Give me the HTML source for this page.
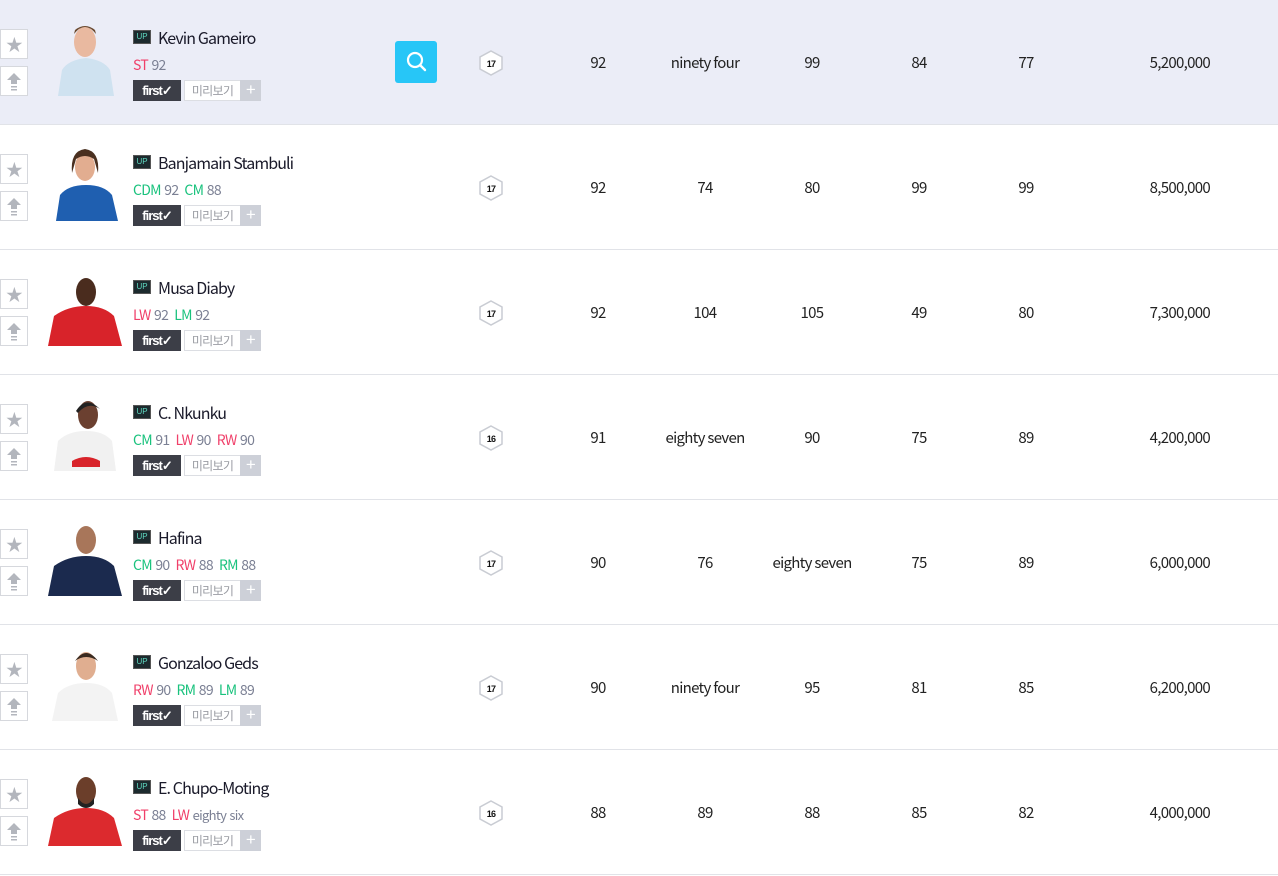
<!DOCTYPE html>
<html><head><meta charset="utf-8"><style>
*{margin:0;padding:0;box-sizing:border-box}
body{width:1278px;height:876px;background:#fff;font-family:"Noto Sans CJK KR","Liberation Sans",sans-serif;color:#222;overflow:hidden;position:relative;letter-spacing:-0.7px}
.r{position:absolute;left:0;width:1278px;height:125px;border-bottom:1px solid #e1e3e8}
.r.h{background:#ebedf7}
.b{position:absolute;left:0;width:28px;height:30px;background:#fff;border:1px solid #d6d8dd;color:#b3b6bd;text-align:center;font-size:17px;line-height:28px}
.s{top:29px}.a{top:66px}
.ph{position:absolute;left:48px;top:20px;width:76px;height:76px;overflow:hidden}
.up{position:absolute;left:133px;top:30px;width:18px;height:14px;background:#1c2a2e;border:1px solid #555;color:#5fd8c0;font-size:8px;line-height:12px;text-align:center;letter-spacing:0;font-family:"Liberation Sans",sans-serif}
.nm{position:absolute;left:158px;top:27px;font-size:16px;line-height:20px;color:#1a1a2a;letter-spacing:-0.9px}
.ps{position:absolute;left:133px;top:56px;font-size:14px;line-height:18px;color:#7b8094;word-spacing:1px}
.ps i{display:inline-block;width:6px}
.red{color:#f0406a}.grn{color:#19c27d}
.f{position:absolute;left:133px;top:80px;width:48px;height:21px;background:#3c3e47;color:#fff;font-weight:bold;font-size:13px;line-height:21px;text-align:center;letter-spacing:-1px;font-family:"Liberation Sans",sans-serif}
.m{position:absolute;left:184px;top:80px;width:57px;height:21px;border:1px solid #dcdee3;background:#fff;color:#9a9ca3;font-size:12px;line-height:19px;text-align:center}
.p{position:absolute;left:240px;top:80px;width:21px;height:21px;background:#cdd0d8;color:#fff;font-size:17px;line-height:20px;text-align:center;font-family:"Liberation Sans",sans-serif}
.hx{position:absolute;left:479px;top:50px;width:24px;height:26px}
.c{position:absolute;top:53px;width:100px;text-align:center;font-size:15px;line-height:20px;color:#222}
.pr{position:absolute;top:53px;right:68px;font-size:15px;line-height:20px;color:#222}
.sb{position:absolute;left:395px;top:41px;width:42px;height:42px;background:#27c6f7;border-radius:3px}
</style></head><body>

<div class="r h" style="top:0">
<div class="b s">★</div><div class="b a"><svg width="26" height="28"><path d="M13 6 L20 13 L16 13 L16 17 L10 17 L10 13 L6 13Z" fill="#b3b6bd"/><rect x="10" y="19" width="6" height="1.5" fill="#b3b6bd"/><rect x="10" y="22" width="6" height="1.5" fill="#b3b6bd"/></svg></div>
<div class="ph"><svg width="76" height="76"><path d="M10 76 L14 50 Q20 40 38 38 Q56 40 62 50 L66 76Z" fill="#cfe2f0"/><ellipse cx="37" cy="22" rx="11" ry="15" fill="#e9b9a0"/><path d="M26 14 Q37 0 48 14 L47 10 Q37 2 27 10Z" fill="#6b4a30"/></svg></div>
<div class="up">UP</div><div class="nm">Kevin Gameiro</div>
<div class="ps"><span class="red">ST</span> 92</div>
<div class="f">first✓</div><div class="m">미리보기</div><div class="p">+</div>
<div class="sb"><svg width="42" height="42"><circle cx="20" cy="19" r="7" fill="none" stroke="#fff" stroke-width="2.2"/><path d="M25 24 L30 29" stroke="#fff" stroke-width="2.4" stroke-linecap="round"/></svg></div>
<svg class="hx" viewBox="0 0 24 26"><path d="M12 1 L23 7 L23 19 L12 25 L1 19 L1 7Z" fill="#fff" stroke="#c9ccd3" stroke-width="1.5"/><text x="12" y="17" font-size="9" text-anchor="middle" font-family="Liberation Sans" font-weight="bold" fill="#111">17</text></svg>
<div class="c" style="left:548px">92</div><div class="c" style="left:655px">ninety four</div><div class="c" style="left:762px">99</div><div class="c" style="left:869px">84</div><div class="c" style="left:976px">77</div><div class="pr">5,200,000</div>
</div>

<div class="r" style="top:125px">
<div class="b s">★</div><div class="b a"><svg width="26" height="28"><path d="M13 6 L20 13 L16 13 L16 17 L10 17 L10 13 L6 13Z" fill="#b3b6bd"/><rect x="10" y="19" width="6" height="1.5" fill="#b3b6bd"/><rect x="10" y="22" width="6" height="1.5" fill="#b3b6bd"/></svg></div>
<div class="ph"><svg width="76" height="76"><path d="M8 76 L12 50 Q20 40 38 40 Q56 40 64 50 L70 76Z" fill="#1f5fb0"/><ellipse cx="37" cy="22" rx="10" ry="14" fill="#e2ad90"/><path d="M24 28 Q22 6 37 4 Q52 6 50 28 L46 14 Q37 8 28 14Z" fill="#4a3020"/></svg></div>
<div class="up">UP</div><div class="nm">Banjamain Stambuli</div>
<div class="ps"><span class="grn">CDM</span> 92<i></i><span class="grn">CM</span> 88</div>
<div class="f">first✓</div><div class="m">미리보기</div><div class="p">+</div>
<svg class="hx" viewBox="0 0 24 26"><path d="M12 1 L23 7 L23 19 L12 25 L1 19 L1 7Z" fill="#fff" stroke="#c9ccd3" stroke-width="1.5"/><text x="12" y="17" font-size="9" text-anchor="middle" font-family="Liberation Sans" font-weight="bold" fill="#111">17</text></svg>
<div class="c" style="left:548px">92</div><div class="c" style="left:655px">74</div><div class="c" style="left:762px">80</div><div class="c" style="left:869px">99</div><div class="c" style="left:976px">99</div><div class="pr">8,500,000</div>
</div>

<div class="r" style="top:250px">
<div class="b s">★</div><div class="b a"><svg width="26" height="28"><path d="M13 6 L20 13 L16 13 L16 17 L10 17 L10 13 L6 13Z" fill="#b3b6bd"/><rect x="10" y="19" width="6" height="1.5" fill="#b3b6bd"/><rect x="10" y="22" width="6" height="1.5" fill="#b3b6bd"/></svg></div>
<div class="ph"><svg width="76" height="76"><path d="M0 76 L6 46 Q20 36 38 36 Q56 36 66 46 L74 76Z" fill="#d8232a"/><ellipse cx="38" cy="22" rx="10" ry="14" fill="#4a2c1e"/></svg></div>
<div class="up">UP</div><div class="nm">Musa Diaby</div>
<div class="ps"><span class="red">LW</span> 92<i></i><span class="grn">LM</span> 92</div>
<div class="f">first✓</div><div class="m">미리보기</div><div class="p">+</div>
<svg class="hx" viewBox="0 0 24 26"><path d="M12 1 L23 7 L23 19 L12 25 L1 19 L1 7Z" fill="#fff" stroke="#c9ccd3" stroke-width="1.5"/><text x="12" y="17" font-size="9" text-anchor="middle" font-family="Liberation Sans" font-weight="bold" fill="#111">17</text></svg>
<div class="c" style="left:548px">92</div><div class="c" style="left:655px">104</div><div class="c" style="left:762px">105</div><div class="c" style="left:869px">49</div><div class="c" style="left:976px">80</div><div class="pr">7,300,000</div>
</div>

<div class="r" style="top:375px">
<div class="b s">★</div><div class="b a"><svg width="26" height="28"><path d="M13 6 L20 13 L16 13 L16 17 L10 17 L10 13 L6 13Z" fill="#b3b6bd"/><rect x="10" y="19" width="6" height="1.5" fill="#b3b6bd"/><rect x="10" y="22" width="6" height="1.5" fill="#b3b6bd"/></svg></div>
<div class="ph"><svg width="76" height="76"><path d="M6 76 L10 46 Q20 36 38 36 Q56 36 64 46 L68 76Z" fill="#f1f1f1"/><path d="M24 66 Q38 58 52 66 L52 72 L24 72Z" fill="#d8232a"/><ellipse cx="40" cy="20" rx="10" ry="14" fill="#6b4030"/><path d="M28 16 Q38 0 52 14 Q40 6 30 18Z" fill="#222"/></svg></div>
<div class="up">UP</div><div class="nm">C. Nkunku</div>
<div class="ps"><span class="grn">CM</span> 91<i></i><span class="red">LW</span> 90<i></i><span class="red">RW</span> 90</div>
<div class="f">first✓</div><div class="m">미리보기</div><div class="p">+</div>
<svg class="hx" viewBox="0 0 24 26"><path d="M12 1 L23 7 L23 19 L12 25 L1 19 L1 7Z" fill="#fff" stroke="#c9ccd3" stroke-width="1.5"/><text x="12" y="17" font-size="9" text-anchor="middle" font-family="Liberation Sans" font-weight="bold" fill="#111">16</text></svg>
<div class="c" style="left:548px">91</div><div class="c" style="left:655px">eighty seven</div><div class="c" style="left:762px">90</div><div class="c" style="left:869px">75</div><div class="c" style="left:976px">89</div><div class="pr">4,200,000</div>
</div>

<div class="r" style="top:500px">
<div class="b s">★</div><div class="b a"><svg width="26" height="28"><path d="M13 6 L20 13 L16 13 L16 17 L10 17 L10 13 L6 13Z" fill="#b3b6bd"/><rect x="10" y="19" width="6" height="1.5" fill="#b3b6bd"/><rect x="10" y="22" width="6" height="1.5" fill="#b3b6bd"/></svg></div>
<div class="ph"><svg width="76" height="76"><path d="M0 76 L6 46 Q20 36 38 36 Q56 36 66 46 L74 76Z" fill="#1b2a4e"/><ellipse cx="38" cy="20" rx="10" ry="14" fill="#a8765a"/></svg></div>
<div class="up">UP</div><div class="nm">Hafina</div>
<div class="ps"><span class="grn">CM</span> 90<i></i><span class="red">RW</span> 88<i></i><span class="grn">RM</span> 88</div>
<div class="f">first✓</div><div class="m">미리보기</div><div class="p">+</div>
<svg class="hx" viewBox="0 0 24 26"><path d="M12 1 L23 7 L23 19 L12 25 L1 19 L1 7Z" fill="#fff" stroke="#c9ccd3" stroke-width="1.5"/><text x="12" y="17" font-size="9" text-anchor="middle" font-family="Liberation Sans" font-weight="bold" fill="#111">17</text></svg>
<div class="c" style="left:548px">90</div><div class="c" style="left:655px">76</div><div class="c" style="left:762px">eighty seven</div><div class="c" style="left:869px">75</div><div class="c" style="left:976px">89</div><div class="pr">6,000,000</div>
</div>

<div class="r" style="top:625px">
<div class="b s">★</div><div class="b a"><svg width="26" height="28"><path d="M13 6 L20 13 L16 13 L16 17 L10 17 L10 13 L6 13Z" fill="#b3b6bd"/><rect x="10" y="19" width="6" height="1.5" fill="#b3b6bd"/><rect x="10" y="22" width="6" height="1.5" fill="#b3b6bd"/></svg></div>
<div class="ph"><svg width="76" height="76"><path d="M4 76 L10 48 Q20 38 38 38 Q56 38 64 48 L70 76Z" fill="#f3f3f3"/><ellipse cx="38" cy="21" rx="10" ry="14" fill="#e0ae90"/><path d="M27 16 Q38 0 50 16 Q38 8 27 16Z" fill="#3a2a20"/></svg></div>
<div class="up">UP</div><div class="nm">Gonzaloo Geds</div>
<div class="ps"><span class="red">RW</span> 90<i></i><span class="grn">RM</span> 89<i></i><span class="grn">LM</span> 89</div>
<div class="f">first✓</div><div class="m">미리보기</div><div class="p">+</div>
<svg class="hx" viewBox="0 0 24 26"><path d="M12 1 L23 7 L23 19 L12 25 L1 19 L1 7Z" fill="#fff" stroke="#c9ccd3" stroke-width="1.5"/><text x="12" y="17" font-size="9" text-anchor="middle" font-family="Liberation Sans" font-weight="bold" fill="#111">17</text></svg>
<div class="c" style="left:548px">90</div><div class="c" style="left:655px">ninety four</div><div class="c" style="left:762px">95</div><div class="c" style="left:869px">81</div><div class="c" style="left:976px">85</div><div class="pr">6,200,000</div>
</div>

<div class="r" style="top:750px">
<div class="b s">★</div><div class="b a"><svg width="26" height="28"><path d="M13 6 L20 13 L16 13 L16 17 L10 17 L10 13 L6 13Z" fill="#b3b6bd"/><rect x="10" y="19" width="6" height="1.5" fill="#b3b6bd"/><rect x="10" y="22" width="6" height="1.5" fill="#b3b6bd"/></svg></div>
<div class="ph"><svg width="76" height="76"><path d="M0 76 L6 48 Q20 38 38 38 Q56 38 66 48 L74 76Z" fill="#dc2a2e"/><ellipse cx="38" cy="21" rx="10" ry="14" fill="#6b3e2a"/><path d="M30 28 Q38 40 46 28 L46 34 Q38 42 30 34Z" fill="#222"/></svg></div>
<div class="up">UP</div><div class="nm">E. Chupo-Moting</div>
<div class="ps"><span class="red">ST</span> 88<i></i><span class="red">LW</span> <span style="font-size:13px">eighty six</span></div>
<div class="f">first✓</div><div class="m">미리보기</div><div class="p">+</div>
<svg class="hx" viewBox="0 0 24 26"><path d="M12 1 L23 7 L23 19 L12 25 L1 19 L1 7Z" fill="#fff" stroke="#c9ccd3" stroke-width="1.5"/><text x="12" y="17" font-size="9" text-anchor="middle" font-family="Liberation Sans" font-weight="bold" fill="#111">16</text></svg>
<div class="c" style="left:548px">88</div><div class="c" style="left:655px">89</div><div class="c" style="left:762px">88</div><div class="c" style="left:869px">85</div><div class="c" style="left:976px">82</div><div class="pr">4,000,000</div>
</div>

</body></html>
